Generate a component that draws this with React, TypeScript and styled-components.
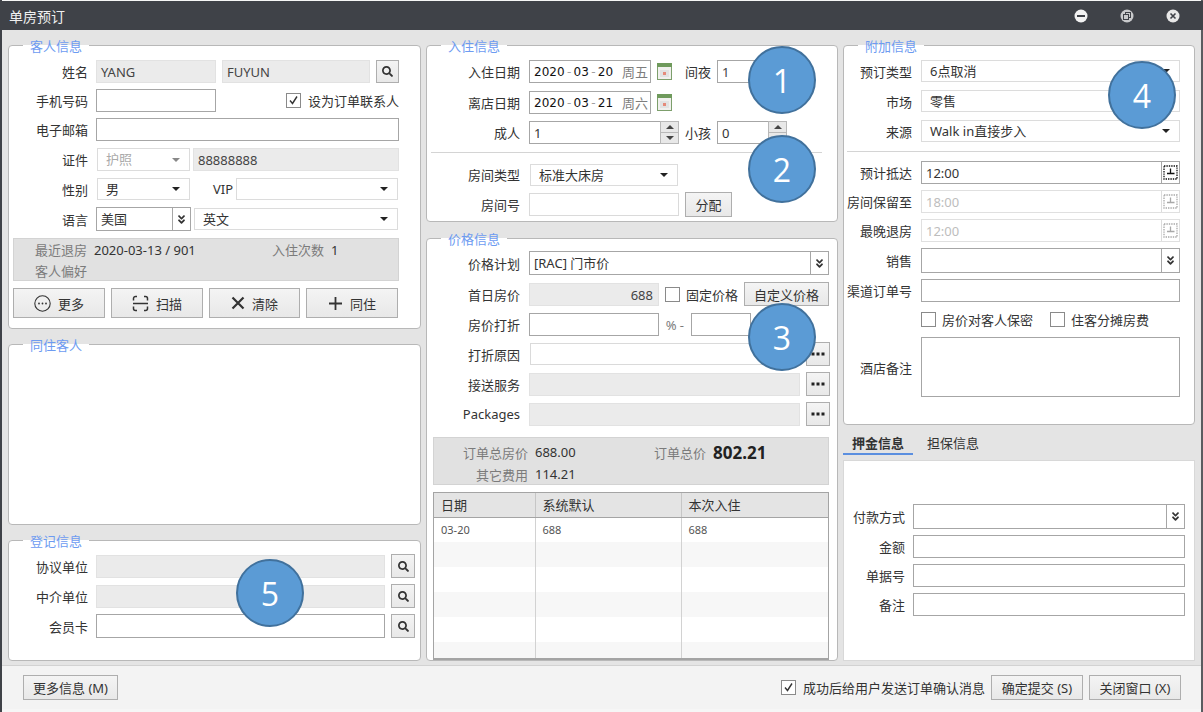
import React from 'react';
import styled, { createGlobalStyle } from 'styled-components';
import { FaSearch, FaAngleDoubleDown } from 'react-icons/fa';

const GlobalStyle = createGlobalStyle`
  * { box-sizing: border-box; }
  html, body { margin: 0; padding: 0; background: #f0f0f0; overflow: hidden; }
  body { font-family: "Noto Sans", "Noto Sans CJK SC", sans-serif; font-size: 13px; color: #333; }
`;

type Place = { $w?: number; $ml?: number; $h?: number };
const place = ({ $w, $ml, $h }: Place) => `
  ${$w ? `width: ${$w}px; flex: none;` : 'flex: 1; min-width: 0;'}
  margin-left: ${$ml ?? 0}px;
  height: ${$h ?? 23}px;
`;

const Win = styled.div`
  position: relative;
  width: 1203px;
  height: 712px;
  padding-top: 1px;
  padding-bottom: 3px;
  background: #f6f6f6;
  border-left: 2px solid #3f4248;
  border-right: 2px solid #5a5c60;
  display: flex;
  flex-direction: column;
`;

const TitleBar = styled.div`
  height: 29px;
  margin-left: -2px;
  margin-right: -2px;
  padding: 0 23px 0 9px;
  background: #3f4248;
  color: #f0f0f0;
  font-size: 14px;
  display: flex;
  align-items: center;
  justify-content: space-between;
`;

const WinControls = styled.div`
  display: flex;
  gap: 32px;
`;

const Main = styled.div`
  flex: 1;
  min-height: 0;
  padding: 15px 6px 4px;
  background: #e4e4e4;
  display: grid;
  grid-template-columns: 413px 412px 352px;
  column-gap: 5px;
`;

const Column = styled.div`
  display: flex;
  flex-direction: column;
  min-height: 0;
`;

const Panel = styled.div<{ $h?: number; $mt?: number; $pt: number; $pl: number; $pr: number }>`
  position: relative;
  ${p => (p.$h ? `height: ${p.$h}px; flex: none;` : 'flex: 1; min-height: 0;')}
  margin-top: ${p => p.$mt ?? 0}px;
  padding: ${p => p.$pt}px ${p => p.$pr}px 0 ${p => p.$pl}px;
  background: #fff;
  border: 1px solid #b8b8b8;
  border-radius: 4px;
  display: flex;
  flex-direction: column;
`;

const PanelTitle = styled.div`
  position: absolute;
  top: -8px;
  left: 14px;
  padding: 0 7px;
  height: 17px;
  line-height: 17px;
  background: linear-gradient(transparent 7px, #fff 7px);
  color: #6d9bf1;
`;

const Row = styled.div<{ $h?: number; $mt?: number }>`
  display: flex;
  align-items: center;
  flex: none;
  height: ${p => p.$h ?? 23}px;
  margin-top: ${p => p.$mt ?? 0}px;
`;

const Label = styled.div<{ $w?: number; $ml?: number }>`
  ${p => (p.$w ? `width: ${p.$w}px;` : '')}
  flex: none;
  margin-left: ${p => p.$ml ?? 0}px;
  text-align: right;
  white-space: nowrap;
  color: #333;
`;

const Field = styled.div<Place & { $disabled?: boolean; $soft?: boolean; $right?: boolean }>`
  ${place}
  padding: 0 5px 0 4px;
  line-height: ${p => p.$h ?? 23}px;
  text-align: ${p => (p.$right ? 'right' : 'left')};
  background: ${p => (p.$disabled ? '#ebebeb' : '#fff')};
  border: 1px solid ${p => (p.$disabled ? '#e2e2e2' : p.$soft ? '#dadada' : '#a6a6a6')};
  color: #444;
  overflow: hidden;
  white-space: nowrap;
`;

const SelectBox = styled.div<Place & { $disabled?: boolean }>`
  ${place}
  position: relative;
  padding-left: 8px;
  line-height: ${p => (p.$h ?? 23) - 2}px;
  background: #fff;
  border: 1px solid #dcdcdc;
  color: ${p => (p.$disabled ? '#aaa' : '#333')};
  &::after {
    content: '';
    position: absolute;
    right: 9px;
    top: 50%;
    margin-top: -2px;
    border-left: 4px solid transparent;
    border-right: 4px solid transparent;
    border-top: 4px solid ${p => (p.$disabled ? '#888' : '#222')};
  }
`;

const Combo = styled.div<Place>`
  ${place}
  display: flex;
  background: #fff;
  border: 1px solid #a6a6a6;
`;

const ComboText = styled.div`
  flex: 1;
  min-width: 0;
  padding-left: 4px;
  line-height: 23px;
  color: #333;
`;

const ComboSide = styled.div<{ $w?: number; $pale?: boolean }>`
  flex: none;
  width: ${p => p.$w ?? 18}px;
  border-left: 1px solid ${p => (p.$pale ? '#dcdcdc' : '#a6a6a6')};
  background: #fff;
  display: flex;
  align-items: center;
  justify-content: center;
  color: #333;
`;

const SpinColumn = styled.div`
  flex: none;
  width: 19px;
  margin: -1px -1px -1px 0;
  display: flex;
  flex-direction: column;
  border: 1px solid #b8b8b8;
  background: #e8e8e8;
`;

const SpinCell = styled.div<{ $down?: boolean }>`
  flex: 1;
  display: flex;
  align-items: center;
  justify-content: center;
  ${p => (p.$down ? 'border-top: 1px solid #b8b8b8;' : '')}
  &::after {
    content: '';
    border-left: 4px solid transparent;
    border-right: 4px solid transparent;
    ${p => (p.$down ? 'border-top: 4px solid #444;' : 'border-bottom: 4px solid #444;')}
  }
`;

const Btn = styled.button<Place>`
  ${place}
  padding: 0;
  font: inherit;
  color: #333;
  background: linear-gradient(#f4f4f4, #e8e8e8);
  border: 1px solid #aeaeae;
  display: flex;
  align-items: center;
  justify-content: center;
  gap: 7px;
`;

const Check = styled.span<{ $ml?: number }>`
  flex: none;
  width: 15px;
  height: 15px;
  margin-left: ${p => p.$ml ?? 0}px;
  background: #fff;
  border: 1px solid #8a8a8a;
  display: flex;
  align-items: center;
  justify-content: center;
`;

const CheckText = styled.span<{ $ml?: number }>`
  margin-left: ${p => p.$ml ?? 6}px;
  white-space: nowrap;
  color: #333;
`;

const PushRight = styled.div`
  margin-left: auto;
  display: flex;
  align-items: center;
`;

const GreyBox = styled.div<{ $w: number; $h: number; $mt: number; $ml?: number; $pt: number }>`
  flex: none;
  width: ${p => p.$w}px;
  height: ${p => p.$h}px;
  margin-top: ${p => p.$mt}px;
  margin-left: ${p => p.$ml ?? 0}px;
  padding-top: ${p => p.$pt}px;
  background: #e1e1e1;
  border: 1px solid #d3d3d3;
`;

const BoxLine = styled.div<{ $h: number }>`
  display: flex;
  align-items: center;
  height: ${p => p.$h}px;
`;

const Muted = styled.span<{ $w?: number; $ml?: number }>`
  flex: none;
  ${p => (p.$w ? `width: ${p.$w}px;` : '')}
  margin-left: ${p => p.$ml ?? 0}px;
  text-align: right;
  color: #7b7b7b;
`;

const Value = styled.span<{ $w?: number; $ml?: number; $big?: boolean }>`
  flex: none;
  ${p => (p.$w ? `width: ${p.$w}px;` : '')}
  margin-left: ${p => p.$ml ?? 0}px;
  color: #333;
  ${p => (p.$big ? 'font-size: 17px; font-weight: 700; color: #222;' : '')}
`;

const ActionRow = styled.div`
  display: grid;
  grid-template-columns: 92px 92px 91px 92px;
  column-gap: 6px;
  margin-top: 7px;
  height: 30px;
`;

const ActionBtn = styled(Btn)`
  width: auto;
  height: 30px;
  margin: 0;
`;

const Divider = styled.div<{ $ml: number; $mr: number; $mt: number }>`
  flex: none;
  height: 1px;
  background: #d4d4d4;
  margin: ${p => p.$mt}px ${p => p.$mr}px 0 ${p => p.$ml}px;
`;

const DateField = styled.div<Place>`
  ${place}
  display: flex;
  align-items: center;
  padding: 0 2px 0 4px;
  background: #fff;
  border: 1px solid #a6a6a6;
`;

const DateNum = styled.span`
  font-family: "DejaVu Sans", sans-serif;
  font-size: 12px;
  color: #111;
`;

const DateSep = styled.span`
  width: 9px;
  text-align: center;
  font-family: "DejaVu Sans", sans-serif;
  font-size: 12px;
  color: #a0a0a0;
`;

const Weekday = styled.span`
  margin-left: auto;
  color: #7d7d7d;
`;

const RateTableWrap = styled.div`
  flex: 1;
  min-height: 0;
  margin: 7px 0 0 6px;
  width: 396px;
  overflow: hidden;
  border: 1px solid #a4a4a4;
  border-bottom-width: 2px;
`;

const RateTable = styled.table`
  width: 100%;
  table-layout: fixed;
  border-collapse: collapse;
`;

const HeadCell = styled.th<{ $w?: number }>`
  ${p => (p.$w ? `width: ${p.$w}px;` : '')}
  height: 24px;
  padding: 0 0 0 7px;
  background: #e4e4e4;
  border-right: 1px solid #c6c6c6;
  border-bottom: 1px solid #a4a4a4;
  font-weight: 400;
  text-align: left;
  color: #333;
  &:last-child { border-right: 0; }
`;

const BodyRow = styled.tr<{ $alt?: boolean }>`
  height: 25px;
  background: ${p => (p.$alt ? '#f7f7f7' : '#fff')};
`;

const BodyCell = styled.td`
  padding: 0 0 0 7px;
  border-right: 1px solid #d2d2d2;
  font-size: 11px;
  color: #555;
  &:last-child { border-right: 0; }
`;

const Tabs = styled.div`
  flex: none;
  display: flex;
  margin-top: 8px;
  height: 22px;
`;

const Tab = styled.div<{ $active?: boolean; $w: number; $ml?: number }>`
  width: ${p => p.$w}px;
  margin-left: ${p => p.$ml ?? 0}px;
  text-align: center;
  line-height: 20px;
  color: #333;
  ${p => (p.$active ? 'font-weight: 700; border-bottom: 2px solid #5b8fe0;' : '')}
`;

const TabBody = styled.div`
  flex: 1;
  min-height: 0;
  margin-top: 5px;
  padding: 43px 9px 0 0;
  background: #fff;
  border: 1px solid #d8d8d8;
`;

const Footer = styled.div`
  flex: none;
  height: 44px;
  padding: 0 20px 0 21px;
  background: #f3f3f3;
  border-top: 1px solid #d2d2d2;
  display: flex;
  align-items: center;
`;

const Callout = styled.div<{ $x: number; $y: number }>`
  position: absolute;
  left: ${p => p.$x - 2 - 34}px;
  top: ${p => p.$y - 34}px;
  width: 68px;
  height: 68px;
  border-radius: 50%;
  background: #5b9bd5;
  border: 2px solid #41719c;
  color: #fff;
  font-family: "Open Sans", sans-serif;
  font-size: 32px;
  display: flex;
  align-items: center;
  justify-content: center;
`;

const MinIcon = () => (
  <svg width="14" height="14" viewBox="0 0 14 14">
    <circle cx="7" cy="7" r="6.5" fill="#f2f2f2" />
    <rect x="3" y="6" width="8" height="2" fill="#3f4248" />
  </svg>
);

const RestoreIcon = () => (
  <svg width="14" height="14" viewBox="0 0 14 14">
    <circle cx="7" cy="7" r="6.5" fill="#c9cacc" />
    <rect x="5.5" y="3.5" width="5" height="5" fill="none" stroke="#3f4248" strokeWidth="1" />
    <rect x="3.5" y="5.5" width="5" height="5" fill="#c9cacc" stroke="#3f4248" strokeWidth="1" />
  </svg>
);

const CloseIcon = () => (
  <svg width="14" height="14" viewBox="0 0 14 14">
    <circle cx="7" cy="7" r="6.5" fill="#e8e8e8" />
    <path d="M4.5 4.5l5 5M9.5 4.5l-5 5" stroke="#3f4248" strokeWidth="1.6" />
  </svg>
);

const CheckMark = () => (
  <svg width="11" height="11" viewBox="0 0 11 11">
    <path d="M2 5.5l2.5 3L9 1.5" fill="none" stroke="#333" strokeWidth="1.4" />
  </svg>
);

const DotsIcon = () => (
  <svg width="14" height="4" viewBox="0 0 14 4">
    <rect x="0.5" y="0.5" width="3" height="3" fill="#222" />
    <rect x="5.5" y="0.5" width="3" height="3" fill="#222" />
    <rect x="10.5" y="0.5" width="3" height="3" fill="#222" />
  </svg>
);

const MoreIcon = () => (
  <svg width="17" height="17" viewBox="0 0 17 17">
    <circle cx="8.5" cy="8.5" r="7.7" fill="none" stroke="#333" strokeWidth="1.1" />
    <circle cx="5" cy="8.5" r="0.9" fill="#333" />
    <circle cx="8.5" cy="8.5" r="0.9" fill="#333" />
    <circle cx="12" cy="8.5" r="0.9" fill="#333" />
  </svg>
);

const ScanIcon = () => (
  <svg width="17" height="17" viewBox="0 0 17 17" fill="none" stroke="#333" strokeWidth="1.5">
    <path d="M1.5 5.5V3.5a2 2 0 0 1 2-2H5M12 1.5h1.5a2 2 0 0 1 2 2v2M1 8.5h15M1.5 11.5v2a2 2 0 0 0 2 2H5M12 15.5h1.5a2 2 0 0 0 2-2v-2" />
  </svg>
);

const ClearIcon = () => (
  <svg width="14" height="14" viewBox="0 0 14 14">
    <path d="M1.5 1.5l11 11M12.5 1.5l-11 11" stroke="#333" strokeWidth="2.2" />
  </svg>
);

const PlusIcon = () => (
  <svg width="15" height="15" viewBox="0 0 15 15">
    <path d="M7.5 1v13M1 7.5h13" stroke="#333" strokeWidth="1.8" />
  </svg>
);

const CalendarIcon = ({ ml }: { ml: number }) => (
  <svg width="15" height="17" viewBox="0 0 15 17" style={{ marginLeft: ml, flex: 'none' }}>
    <rect x="0.5" y="0.5" width="14" height="16" fill="#f0f0ee" stroke="#7d9f6c" />
    <rect x="0" y="0" width="15" height="4" fill="#6f9a5c" />
    <rect x="3" y="7" width="9" height="7" fill="#e2e2e2" />
    <rect x="6" y="9" width="3" height="3" fill="#e58a7a" />
  </svg>
);

const ClockIcon = ({ off }: { off?: boolean }) => {
  const c = off ? '#a8a8a8' : '#111';
  return (
    <svg width="15" height="15" viewBox="0 0 15 15" fill="none" stroke={c}>
      <rect x="1" y="1" width="13" height="13" strokeWidth="1.3" strokeDasharray="1.4 1" />
      <path d="M7.5 3.5v5M4 8.5h7.5" strokeWidth="1.3" />
    </svg>
  );
};

const SearchBtn = ({ ml }: { ml: number }) => (
  <Btn $w={24} $h={24} $ml={ml}><FaSearch size={11} color="#333" /></Btn>
);

const DotsBtn = ({ ml }: { ml: number }) => (
  <Btn $w={24} $h={24} $ml={ml}><DotsIcon /></Btn>
);

const DateValue = ({ d, week }: { d: string; week: string }) => (
  <DateField $w={122} $ml={9} $h={23}>
    <DateNum>2020</DateNum><DateSep>-</DateSep>
    <DateNum>03</DateNum><DateSep>-</DateSep>
    <DateNum>{d}</DateNum>
    <Weekday>{week}</Weekday>
  </DateField>
);

const TimeField = ({ value, off, mt }: { value: string; off?: boolean; mt: number }) => (
  <Row $mt={mt}>
    <Label $w={68}>{off ? (value === '18:00' ? '房间保留至' : '最晚退房') : '预计抵达'}</Label>
    <Combo $ml={9} style={off ? { borderColor: '#e0e0e0' } : undefined}>
      <ComboText style={off ? { color: '#bdbdbd' } : undefined}>{value}</ComboText>
      <ComboSide $pale={off}><ClockIcon off={off} /></ComboSide>
    </Combo>
  </Row>
);

const rows = [false, true, false, true, false, true];

const App: React.FC = () => {
  return (
    <Win>
      <GlobalStyle />
      <TitleBar>
        单房预订
        <WinControls>
          <MinIcon />
          <RestoreIcon />
          <CloseIcon />
        </WinControls>
      </TitleBar>

      <Main>
        <Column>
          <Panel $h={284} $pt={14} $pl={4} $pr={21}>
            <PanelTitle>客人信息</PanelTitle>
            <Row>
              <Label $w={75}>姓名</Label>
              <Field $w={120} $ml={8} $disabled>YANG</Field>
              <Field $w={148} $ml={6} $disabled>FUYUN</Field>
              <Btn $w={23} $ml={6}><FaSearch size={11} color="#333" /></Btn>
            </Row>
            <Row $mt={6}>
              <Label $w={75}>手机号码</Label>
              <Field $w={120} $ml={8} />
              <PushRight>
                <Check><CheckMark /></Check>
                <CheckText $ml={7}>设为订单联系人</CheckText>
              </PushRight>
            </Row>
            <Row $mt={6}>
              <Label $w={75}>电子邮箱</Label>
              <Field $ml={8} />
            </Row>
            <Row $mt={7}>
              <Label $w={75}>证件</Label>
              <SelectBox $w={93} $ml={9} $disabled>护照</SelectBox>
              <Field $ml={3} $disabled>88888888</Field>
            </Row>
            <Row $mt={7} $h={22}>
              <Label $w={75}>性别</Label>
              <SelectBox $w={93} $ml={9} $h={22}>男</SelectBox>
              <Label $ml={23}>VIP</Label>
              <SelectBox $w={162} $ml={3} $h={22} />
            </Row>
            <Row $mt={7} $h={24}>
              <Label $w={75}>语言</Label>
              <Combo $w={95} $ml={8} $h={24}>
                <ComboText>美国</ComboText>
                <ComboSide><FaAngleDoubleDown size={11} /></ComboSide>
              </Combo>
              <SelectBox $w={204} $ml={3} $h={22}>英文</SelectBox>
            </Row>
            <GreyBox $w={386} $h={43} $mt={7} $pt={0}>
              <BoxLine $h={21}>
                <Muted $w={73}>最近退房</Muted>
                <Value $w={178} $ml={7}>2020-03-13 / 901</Value>
                <Muted>入住次数</Muted>
                <Value $ml={7}>1</Value>
              </BoxLine>
              <BoxLine $h={20}>
                <Muted $w={73}>客人偏好</Muted>
              </BoxLine>
            </GreyBox>
            <ActionRow>
              <ActionBtn><MoreIcon />更多</ActionBtn>
              <ActionBtn><ScanIcon />扫描</ActionBtn>
              <ActionBtn><ClearIcon />清除</ActionBtn>
              <ActionBtn><PlusIcon />同住</ActionBtn>
            </ActionRow>
          </Panel>

          <Panel $mt={15} $pt={0} $pl={0} $pr={0}>
            <PanelTitle>同住客人</PanelTitle>
          </Panel>

          <Panel $h={121} $mt={15} $pt={13} $pl={4} $pr={5}>
            <PanelTitle>登记信息</PanelTitle>
            <Row $h={24}>
              <Label $w={75}>协议单位</Label>
              <Field $ml={8} $disabled />
              <SearchBtn ml={6} />
            </Row>
            <Row $h={24} $mt={6}>
              <Label $w={75}>中介单位</Label>
              <Field $ml={8} $disabled />
              <SearchBtn ml={6} />
            </Row>
            <Row $h={24} $mt={6}>
              <Label $w={75}>会员卡</Label>
              <Field $ml={8} $h={24} />
              <SearchBtn ml={6} />
            </Row>
          </Panel>
        </Column>

        <Column>
          <Panel $h={177} $pt={14} $pl={0} $pr={8}>
            <PanelTitle>入住信息</PanelTitle>
            <Row>
              <Label $w={93}>入住日期</Label>
              <DateValue d="20" week="周五" />
              <CalendarIcon ml={6} />
              <Label $ml={13}>间夜</Label>
              <Field $w={70} $ml={6}>1</Field>
            </Row>
            <Row $mt={8}>
              <Label $w={93}>离店日期</Label>
              <DateValue d="21" week="周六" />
              <CalendarIcon ml={6} />
            </Row>
            <Row $mt={7}>
              <Label $w={93}>成人</Label>
              <Combo $w={150} $ml={9}>
                <ComboText>1</ComboText>
                <SpinColumn><SpinCell /><SpinCell $down /></SpinColumn>
              </Combo>
              <Label $ml={6}>小孩</Label>
              <Combo $w={70} $ml={6}>
                <ComboText>0</ComboText>
                <SpinColumn><SpinCell /><SpinCell $down /></SpinColumn>
              </Combo>
            </Row>
            <Divider $ml={4} $mr={7} $mt={8} />
            <Row $mt={10} $h={23}>
              <Label $w={93}>房间类型</Label>
              <SelectBox $w={148} $ml={10} $h={22}>标准大床房</SelectBox>
            </Row>
            <Row $mt={6} $h={25}>
              <Label $w={93}>房间号</Label>
              <Field $w={150} $ml={9} $soft />
              <Btn $w={47} $h={25} $ml={6}>分配</Btn>
            </Row>
          </Panel>

          <Panel $mt={16} $pt={12} $pl={0} $pr={8}>
            <PanelTitle>价格信息</PanelTitle>
            <Row $h={24}>
              <Label $w={93}>价格计划</Label>
              <Combo $ml={9} $h={24}>
                <ComboText>[RAC] 门市价</ComboText>
                <ComboSide><FaAngleDoubleDown size={11} /></ComboSide>
              </Combo>
            </Row>
            <Row $h={24} $mt={7}>
              <Label $w={93}>首日房价</Label>
              <Field $w={130} $ml={9} $disabled $right>688</Field>
              <Check $ml={6} />
              <CheckText>固定价格</CheckText>
              <Btn $w={85} $h={24} $ml={6}>自定义价格</Btn>
            </Row>
            <Row $mt={7}>
              <Label $w={93}>房价打折</Label>
              <Field $w={130} $ml={9} />
              <Muted $w={20} $ml={5}>% -</Muted>
              <Field $w={60} $ml={7} />
            </Row>
            <Row $h={24} $mt={6}>
              <Label $w={93}>打折原因</Label>
              <Field $w={270} $ml={10} $h={22} $soft />
              <DotsBtn ml={6} />
            </Row>
            <Row $h={24} $mt={6}>
              <Label $w={93}>接送服务</Label>
              <Field $w={271} $ml={9} $disabled />
              <DotsBtn ml={6} />
            </Row>
            <Row $h={24} $mt={6}>
              <Label $w={93}>Packages</Label>
              <Field $w={271} $ml={9} $disabled />
              <DotsBtn ml={6} />
            </Row>
            <GreyBox $w={396} $h={48} $mt={11} $ml={6} $pt={3}>
              <BoxLine $h={22}>
                <Muted $w={94}>订单总房价</Muted>
                <Value $w={119} $ml={7}>688.00</Value>
                <Muted>订单总价</Muted>
                <Value $ml={7} $big>802.21</Value>
              </BoxLine>
              <BoxLine $h={22}>
                <Muted $w={94}>其它费用</Muted>
                <Value $ml={7}>114.21</Value>
              </BoxLine>
            </GreyBox>
            <RateTableWrap>
              <RateTable>
                <thead>
                  <tr>
                    <HeadCell $w={101}>日期</HeadCell>
                    <HeadCell $w={146}>系统默认</HeadCell>
                    <HeadCell>本次入住</HeadCell>
                  </tr>
                </thead>
                <tbody>
                  {rows.map((alt, i) => (
                    <BodyRow key={i} $alt={alt}>
                      <BodyCell>{i === 0 ? '03-20' : ''}</BodyCell>
                      <BodyCell>{i === 0 ? '688' : ''}</BodyCell>
                      <BodyCell>{i === 0 ? '688' : ''}</BodyCell>
                    </BodyRow>
                  ))}
                </tbody>
              </RateTable>
            </RateTableWrap>
          </Panel>
        </Column>

        <Column>
          <Panel $h={380} $pt={14} $pl={0} $pr={14}>
            <PanelTitle>附加信息</PanelTitle>
            <Row $h={22}>
              <Label $w={68}>预订类型</Label>
              <SelectBox $ml={9} $h={22}>6点取消</SelectBox>
            </Row>
            <Row $h={22} $mt={8}>
              <Label $w={68}>市场</Label>
              <SelectBox $ml={9} $h={22}>零售</SelectBox>
            </Row>
            <Row $h={22} $mt={8}>
              <Label $w={68}>来源</Label>
              <SelectBox $ml={9} $h={22}>Walk in直接步入</SelectBox>
            </Row>
            <Divider $ml={3} $mr={0} $mt={9} />
            <TimeField value="12:00" mt={9} />
            <TimeField value="18:00" off mt={6} />
            <TimeField value="12:00" off mt={6} />
            <Row $h={25} $mt={6}>
              <Label $w={68}>销售</Label>
              <Combo $ml={9} $h={25}>
                <ComboText />
                <ComboSide><FaAngleDoubleDown size={11} /></ComboSide>
              </Combo>
            </Row>
            <Row $mt={6}>
              <Label $w={68}>渠道订单号</Label>
              <Field $ml={9} />
            </Row>
            <Row $h={16} $mt={9}>
              <Check $ml={77} />
              <CheckText>房价对客人保密</CheckText>
              <Check $ml={17} />
              <CheckText>住客分摊房费</CheckText>
            </Row>
            <Row $h={60} $mt={10}>
              <Label $w={68}>酒店备注</Label>
              <Field $ml={9} $h={60} />
            </Row>
          </Panel>

          <Tabs>
            <Tab $w={70} $active>押金信息</Tab>
            <Tab $w={52} $ml={14}>担保信息</Tab>
          </Tabs>
          <TabBody>
            <Row $h={25}>
              <Label $w={61}>付款方式</Label>
              <Combo $ml={8} $h={25}>
                <ComboText />
                <ComboSide><FaAngleDoubleDown size={11} /></ComboSide>
              </Combo>
            </Row>
            <Row $mt={6}>
              <Label $w={61}>金额</Label>
              <Field $ml={8} />
            </Row>
            <Row $mt={6}>
              <Label $w={61}>单据号</Label>
              <Field $ml={8} />
            </Row>
            <Row $mt={6}>
              <Label $w={61}>备注</Label>
              <Field $ml={8} />
            </Row>
          </TabBody>
        </Column>
      </Main>

      <Footer>
        <Btn $w={95} $h={25}>更多信息 (M)</Btn>
        <PushRight>
          <Check><CheckMark /></Check>
          <CheckText $ml={7}>成功后给用户发送订单确认消息</CheckText>
          <Btn $w={92} $h={25} $ml={6}>确定提交 (S)</Btn>
          <Btn $w={92} $h={25} $ml={6}>关闭窗口 (X)</Btn>
        </PushRight>
      </Footer>

      <Callout $x={782} $y={80}>1</Callout>
      <Callout $x={782} $y={169}>2</Callout>
      <Callout $x={782} $y={337}>3</Callout>
      <Callout $x={1142} $y={95}>4</Callout>
      <Callout $x={270} $y={593}>5</Callout>
    </Win>
  );
};

export default App;
